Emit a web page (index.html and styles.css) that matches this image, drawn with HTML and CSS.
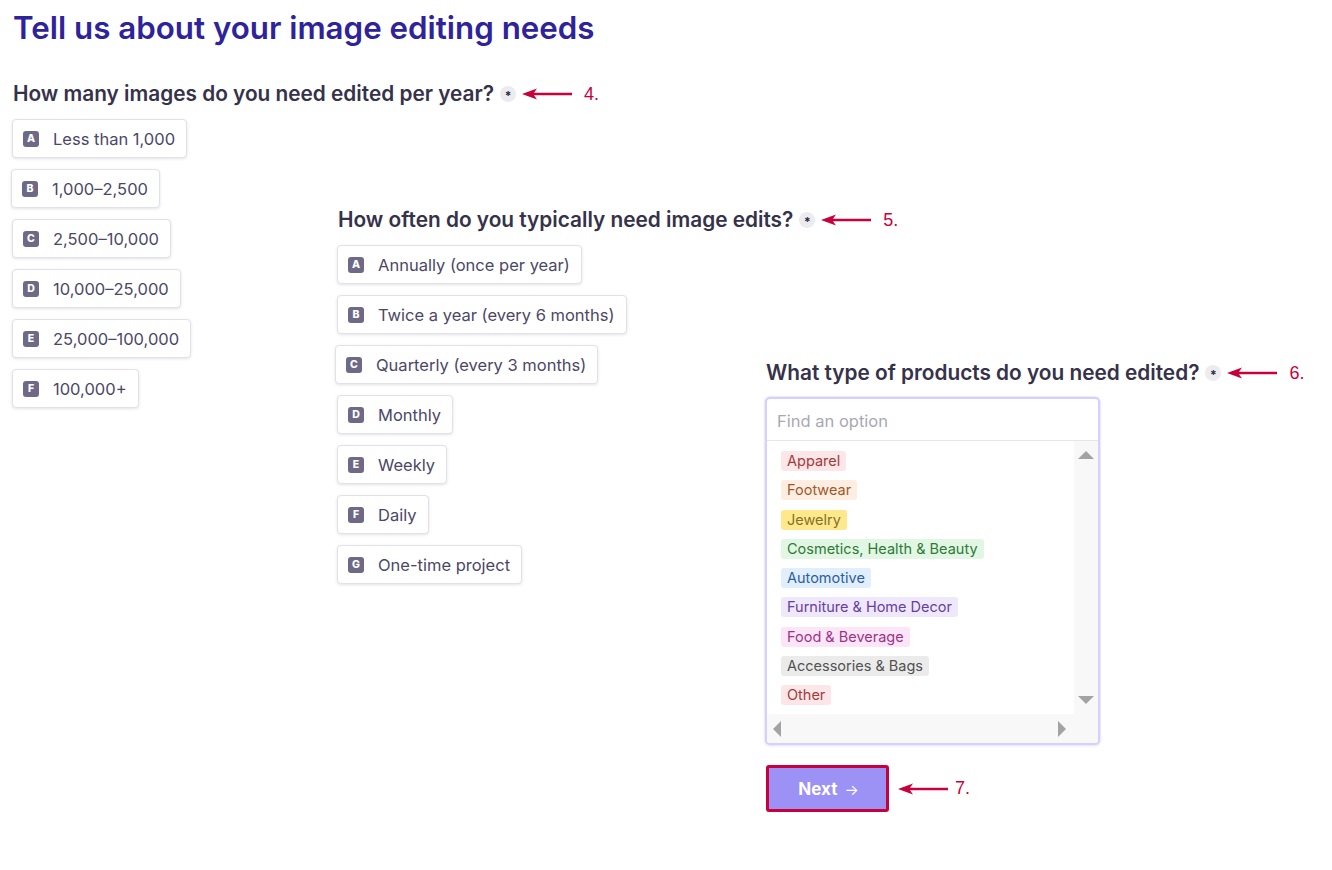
FILE: index.html
```html
<!DOCTYPE html>
<html lang="en">
<head>
<meta charset="utf-8">
<title>Tell us about your image editing needs</title>
<link rel="stylesheet" href="styles.css">
</head>
<body>
<h1 class="title">Tell us about your image editing needs</h1>
<div class="questions">
  <section class="question q1">
    <h2 class="q-head">How many images do you need edited per year?<span class="req">*</span><span class="note"><svg class="arrow" width="50" height="14" viewBox="0 0 50 14"><path d="M0 7 L15 1.5 L12 5.8 L50 5.8 L50 8.2 L12 8.2 L15 12.5 Z" fill="#c8003c"/></svg><span class="num">4.</span></span></h2>
    <div class="options">
      <div class="opt"><span class="key">A</span>Less than 1,000</div>
      <div class="opt shift"><span class="key">B</span>1,000–2,500</div>
      <div class="opt"><span class="key">C</span>2,500–10,000</div>
      <div class="opt"><span class="key">D</span>10,000–25,000</div>
      <div class="opt"><span class="key">E</span>25,000–100,000</div>
      <div class="opt"><span class="key">F</span>100,000+</div>
    </div>
  </section>
  <section class="question q2">
    <h2 class="q-head">How often do you typically need image edits?<span class="req">*</span><span class="note"><svg class="arrow" width="50" height="14" viewBox="0 0 50 14"><path d="M0 7 L15 1.5 L12 5.8 L50 5.8 L50 8.2 L12 8.2 L15 12.5 Z" fill="#c8003c"/></svg><span class="num">5.</span></span></h2>
    <div class="options">
      <div class="opt"><span class="key">A</span>Annually (once per year)</div>
      <div class="opt"><span class="key">B</span>Twice a year (every 6 months)</div>
      <div class="opt shift2"><span class="key">C</span>Quarterly (every 3 months)</div>
      <div class="opt"><span class="key">D</span>Monthly</div>
      <div class="opt"><span class="key">E</span>Weekly</div>
      <div class="opt"><span class="key">F</span>Daily</div>
      <div class="opt"><span class="key">G</span>One-time project</div>
    </div>
  </section>
  <section class="question q3">
    <h2 class="q-head">What type of products do you need edited?<span class="req">*</span><span class="note"><svg class="arrow" width="50" height="14" viewBox="0 0 50 14"><path d="M0 7 L15 1.5 L12 5.8 L50 5.8 L50 8.2 L12 8.2 L15 12.5 Z" fill="#c8003c"/></svg><span class="num">6.</span></span></h2>
    <div class="picker">
      <div class="search">Find an option</div>
      <div class="listwrap">
        <div class="list">
          <span class="tag t-red">Apparel</span>
          <span class="tag t-orange">Footwear</span>
          <span class="tag t-yellow">Jewelry</span>
          <span class="tag t-green">Cosmetics, Health &amp; Beauty</span>
          <span class="tag t-blue">Automotive</span>
          <span class="tag t-purple">Furniture &amp; Home Decor</span>
          <span class="tag t-pink">Food &amp; Beverage</span>
          <span class="tag t-gray">Accessories &amp; Bags</span>
          <span class="tag t-red">Other</span>
        </div>
        <div class="vscroll"><span class="tri up"></span><span class="tri down"></span></div>
        <div class="hscroll"><span class="tri left"></span><span class="tri right"></span></div>
        <div class="corner"></div>
      </div>
    </div>
    <div class="next-row">
      <button class="next">Next <span class="next-arrow">→</span></button>
      <span class="note"><svg class="arrow" width="50" height="14" viewBox="0 0 50 14"><path d="M0 7 L15 1.5 L12 5.8 L50 5.8 L50 8.2 L12 8.2 L15 12.5 Z" fill="#c8003c"/></svg><span class="num">7.</span></span>
    </div>
  </section>
</div>
</body>
</html>
```
FILE: styles.css
```css
* { box-sizing: border-box; }
html, body { background: #ffffff; }
body {
  margin: 0;
  padding: 10px 0 0 12px;
  font-family: Inter, "Noto Sans", "Liberation Sans", sans-serif;
  color: #35324a;
}
.title {
  margin: 0;
  font-size: 31.3px;
  line-height: 36px;
  font-weight: 600;
  color: #2e2399;
  padding-left: 1px;
}
.questions {
  display: grid;
  grid-template-columns: 325px 429px 1fr;
  align-items: start;
  margin-top: 37px;
}
.q2 { margin-top: 126px; }
.q3 { margin-top: 279px; }
.q-head {
  margin: 0 0 14px 1px;
  font-size: 20.8px;
  line-height: 22px;
  font-weight: 600;
  color: #35324a;
  white-space: nowrap;
  display: flex;
  align-items: center;
}
.q3 .q-head { margin-bottom: 13px; margin-left: 0; }
.req {
  flex: none;
  display: inline-flex;
  align-items: center;
  justify-content: center;
  width: 16px;
  height: 16px;
  border-radius: 50%;
  background: #ececf0;
  margin-left: 6px;
  font-size: 12px;
  font-weight: 700;
  line-height: 16px;
  color: #2a2838;
  padding-top: 4px;
}
.note {
  flex: none;
  display: inline-flex;
  align-items: center;
  margin-left: 6px;
}
.arrow { display: block; flex: none; }
.num {
  margin-left: 12px;
  font-family: "Liberation Sans", Arial, sans-serif;
  font-weight: 400;
  font-size: 18px;
  color: #c8003c;
}
.options {
  display: flex;
  flex-direction: column;
  align-items: flex-start;
  gap: 11px;
}
.opt {
  display: inline-flex;
  align-items: center;
  height: 39px;
  padding: 0 11px 0 10px;
  border: 1px solid #e2e1e8;
  border-radius: 4px;
  box-shadow: 0 1px 3px rgba(30, 25, 60, 0.12);
  background: #fff;
  font-size: 16.5px;
  color: #4c4766;
  white-space: nowrap;
}
.opt.shift { margin-left: -1px; }
.opt.shift2 { margin-left: -2px; }
.key {
  flex: none;
  display: inline-flex;
  align-items: center;
  justify-content: center;
  width: 16px;
  height: 16px;
  border-radius: 3px;
  background: #6e6987;
  color: #fff;
  font-size: 10.5px;
  font-weight: 800;
  margin-right: 14px;
}
.picker {
  width: 335px;
  height: 348px;
  margin-left: -1px;
  border: 2px solid #d6d0fa;
  border-radius: 5px;
  box-shadow: 0 0 0 1px #ece9fd, 0 1px 3px rgba(80, 60, 200, 0.15);
  display: flex;
  flex-direction: column;
  overflow: hidden;
  background: #fff;
}
.search {
  height: 42px;
  flex: none;
  padding: 3px 10px 0;
  display: flex;
  align-items: center;
  font-size: 16.5px;
  color: #a9a8b4;
  border-bottom: 1px solid #e6e6ea;
}
.listwrap {
  flex: 1;
  display: grid;
  grid-template-columns: 1fr 24px;
  grid-template-rows: 1fr 29px;
}
.list {
  display: flex;
  flex-direction: column;
  align-items: flex-start;
  gap: 9.3px;
  padding: 10px 0 0 14px;
}
.tag {
  display: inline-block;
  height: 20px;
  line-height: 20px;
  padding: 0 6px;
  border-radius: 3px;
  font-size: 14.5px;
  white-space: nowrap;
}
.t-red { background: #fde6e7; color: #a23b3c; }
.t-orange { background: #fdeee1; color: #9e5a2c; }
.t-yellow { background: #fde98c; color: #85712a; }
.t-green { background: #e2f6e4; color: #2f7a38; }
.t-blue { background: #e1eefd; color: #2c5f9e; }
.t-purple { background: #efe7fc; color: #66419c; }
.t-pink { background: #fbe5f6; color: #9d3389; }
.t-gray { background: #ebebeb; color: #525252; }
.vscroll {
  background: #f8f8f8;
  display: flex;
  flex-direction: column;
  justify-content: space-between;
  align-items: center;
  padding: 10px 0 10px;
}
.hscroll {
  background: #f8f8f8;
  display: flex;
  justify-content: space-between;
  align-items: center;
  padding: 0 8px 0 6px;
}
.corner { background: #f8f8f8; }
.tri { display: block; width: 0; height: 0; }
.tri.up { border-left: 8px solid transparent; border-right: 8px solid transparent; border-bottom: 8px solid #a3a3a3; }
.tri.down { border-left: 8px solid transparent; border-right: 8px solid transparent; border-top: 8px solid #a3a3a3; }
.tri.left { border-top: 8px solid transparent; border-bottom: 8px solid transparent; border-right: 8px solid #a3a3a3; }
.tri.right { border-top: 8px solid transparent; border-bottom: 8px solid transparent; border-left: 8px solid #a3a3a3; }
.next-row {
  display: flex;
  align-items: center;
  margin-top: 20px;
}
.next {
  width: 123px;
  height: 47px;
  border: 3px solid #c8003c;
  border-radius: 3px;
  background: #9c91f4;
  color: #fff;
  font-family: Inter, "Noto Sans", sans-serif;
  font-size: 17px;
  font-weight: 700;
  padding: 0 0 0 2px;
  text-align: center;
}
.next-arrow { font-weight: 400; margin-left: 3px; font-size: 15px; }
.next-row .note { margin-left: 9px; }
.next-row .num { margin-left: 7px; }
```
